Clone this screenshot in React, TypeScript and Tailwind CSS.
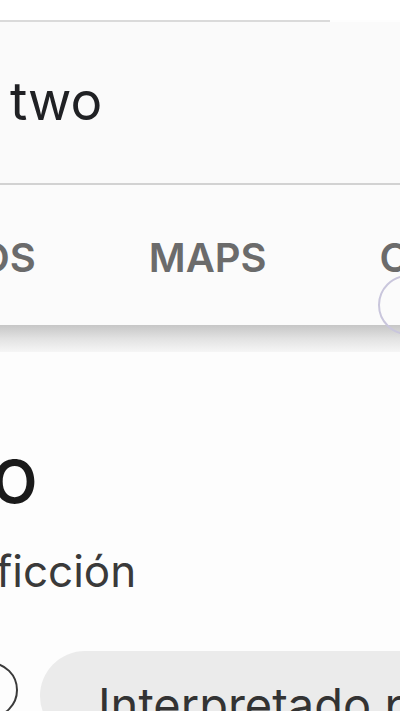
export default function App() {
  return (
    <div className="relative w-[400px] h-[711px] overflow-hidden bg-[#fdfdfd] font-['Inter',sans-serif]">
      {/* search field */}
      <div className="h-[20px] bg-white" />
      <div className="h-[2px] w-[330px] bg-[#dadada]" />
      <div className="h-[161px] bg-[#fafafa] pl-[10px] pt-[53px]">
        <span className="text-[53px] leading-[53px] text-[#202124]">two</span>
      </div>
      <div className="h-[2px] bg-[#d2d2d2]" />

      {/* tabs */}
      <div className="relative h-[140px] bg-[#fbfbfb] flex items-center pt-[6px]">
        <div className="flex items-center gap-[113px] -ml-[21px] text-[40px] font-semibold text-[#6b6b6b] whitespace-nowrap">
          <span>OS</span>
          <span>MAPS</span>
          <span>C</span>
        </div>
        {/* touch ripple */}
        <div className="absolute z-10 left-[378px] top-[90px] w-[60px] h-[60px] rounded-full border-2 border-[#c9c6dc]" />
      </div>
      <div className="h-[27px] bg-gradient-to-b from-[#c6c6c6] via-[#e2e2e2] to-[#f6f6f6]" />

      {/* result */}
      <div className="pt-[100px] overflow-hidden">
        <div className="-ml-[8px] text-[59px] leading-[60px] font-semibold text-[#1a1a1a]">O</div>
        <div className="mt-[36px] -ml-[4px] text-[44px] leading-[46px] text-[#3a3a3a]">ficción</div>
      </div>

      <div className="flex items-start mt-[57px]">
        <div className="-ml-[38px] mt-[11px] w-[56px] h-[56px] shrink-0 rounded-full border-2 border-[#3a3a3a]" />
        <div className="ml-[22px] h-[90px] flex-1 min-w-[400px] rounded-l-[45px] bg-[#ebebeb] pl-[58px] pt-[30px] whitespace-nowrap text-[47px] leading-[47px] text-[#333333]">
          Interpretado por
        </div>
      </div>
    </div>
  );
}
